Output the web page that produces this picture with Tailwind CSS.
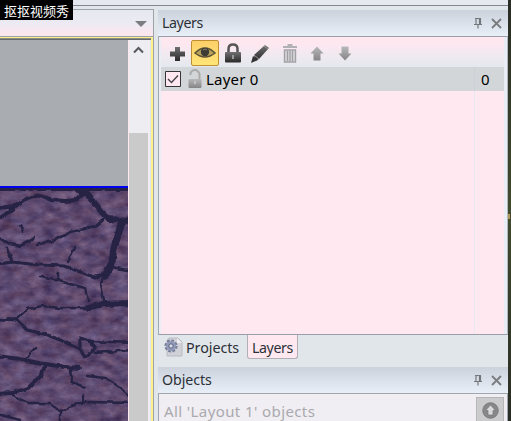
<!DOCTYPE html>
<html lang="en">
<head>
<meta charset="utf-8">
<title>Layers</title>
<script src="https://cdn.jsdelivr.net/npm/@tailwindcss/browser@4"></script>
</head>
<body class="relative flex h-[421px] w-[511px] flex-col overflow-hidden bg-[#e1e6ea] font-['Noto_Sans','Noto_Sans_CJK_SC',sans-serif] text-[14px] text-[#2c3036]">
<svg class="absolute h-0 w-0">
  <defs>
    <linearGradient id="dark" x1="0" y1="0" x2="0" y2="1"><stop offset="0" stop-color="#707070"/><stop offset="1" stop-color="#292929"/></linearGradient>
    <linearGradient id="soft" x1="0" y1="0" x2="0" y2="1"><stop offset="0" stop-color="#b8b8ba"/><stop offset="1" stop-color="#858587"/></linearGradient>
    <symbol id="pin" viewBox="0 0 10 12"><path d="M2 1.500h6M3 1.500v6M6.500 1.500v6M7.500 1.500v6M1 7.500h8M5 8v3.500" fill="none" stroke="#74777b" stroke-width="1.200"/></symbol>
    <symbol id="close" viewBox="0 0 11 11"><path d="M1 1l9 9M10 1l-9 9" fill="none" stroke="#7b7d81" stroke-width="1.900"/></symbol>
  </defs>
</svg>
<div class="mr-[3px] flex h-[6px] shrink-0 border-b border-[#85868f] bg-[#e5e8ee]"></div>
<div class="flex min-h-0 flex-1">
  <main class="mt-[3px] flex w-[154px] shrink-0 flex-col border-t border-r border-[#9ea3aa]">
    <div class="flex h-[27px] shrink-0 items-start justify-end border-b border-[#9ea3aa] bg-linear-to-b from-[#e5e9ef] via-[#eceaf4] to-[#ffe6ee] pt-[11px] pr-[6px]">
      <svg class="h-[6px] w-[12px]" viewBox="0 0 12 6"><path d="M0 0h12L6 6z" fill="#7b7d80"/></svg>
    </div>
    <div class="flex min-h-0 flex-1 border-t border-r-2 border-[#fff08c]">
      <div class="flex min-h-0 w-[150px] flex-1 flex-col">
        <div class="h-[2px] shrink-0 border-b border-[#666a70] bg-[#8f8d83]"></div>
        <div class="flex min-h-0 flex-1">
          <div class="flex w-[128px] flex-col">
            <div class="h-[146px] shrink-0 bg-[#a9acb0]"></div>
            <div class="h-[2px] shrink-0 bg-[#0000f0]"></div>
            <svg class="h-[233px] w-[128px] shrink-0" viewBox="0 188 128 233">
              <defs>
                <filter id="stone" x="0" y="0" width="100%" height="100%" color-interpolation-filters="sRGB">
                  <feTurbulence type="fractalNoise" baseFrequency=".07 .12" numOctaves="4" seed="8"/>
                  <feColorMatrix values=".3 .1 0 0 .17  .3 .03 0 0 .125  .3 -.04 0 0 .305  0 0 0 0 1"/>
                  <feGaussianBlur stdDeviation=".5" edgeMode="duplicate"/>
                </filter>
                <filter id="edge" x="-5%" y="-5%" width="110%" height="110%" color-interpolation-filters="sRGB">
                  <feTurbulence type="fractalNoise" baseFrequency=".13" numOctaves="2" seed="3" result="n"/>
                  <feDisplacementMap in="SourceGraphic" in2="n" scale="4" xChannelSelector="R" yChannelSelector="G"/>
                  <feGaussianBlur stdDeviation=".7"/>
                </filter>
              </defs>
              <rect y="188" width="128" height="233" filter="url(#stone)"/>
              <g fill="none" stroke="#262344" stroke-linecap="round" stroke-linejoin="round" filter="url(#edge)">
                <g stroke-width="3.800">
                  <path d="M-3 208L15 206 28 198 40 195 52 200 65 201 75 200 85 192M-3 220L10 211 15 206M-3 189H132"/>
                  <path d="M-3 237L10 244 20 246 29 242 33 238M37 245L55 240 70 232 85 229 97 225 103 220" stroke-width="2.800"/>
                  <path d="M7 248L12 262 40 265 65 266 80 272 95 277 106 275M-3 264L12 262" stroke-width="3"/>
                  <path d="M-3 319L17 320 27 330 45 334 65 342 80 350 85 357 95 349 90 341 80 338V347" stroke-width="3.200"/>
                  <path d="M-3 356L20 359 45 364 65 367 80 368M45 364L42 375 28 388 12 393-3 394"/>
                </g>
                <path d="M78 190L87 193 100 210 108 219 132 221" stroke-width="6"/>
                <path d="M122 222L118 235 114 248 112 262 105 276" stroke-width="7"/>
                <path d="M132 303L103 304 88 308" stroke-width="6"/>
                <g stroke-width="2.400">
                  <path d="M75 247L68 262M112 267L132 271M20 225L23 232M57 273L58 281M40 277L55 280 70 284 85 288 88 300M103 276L101 285 104 300"/>
                  <path d="M88 308L60 308 42 306 27 309 17 319M95 353L132 350M90 341L132 343M25 359L35 348"/>
                  <path d="M70 370L72 382 85 387M87 376L105 378 118 386 132 397M12 395L28 403 50 403 60 412 80 403 88 402 132 403M60 412V424M-3 414L20 420M83 395V402"/>
                </g>
              </g>
            </svg>
          </div>
          <div class="flex w-[22px] flex-col border-l border-[#ffe7ee] bg-[#eeedf1]">
            <div class="flex h-[93px] shrink-0 justify-center pt-[6px]"><svg class="-ml-[2px] h-[8px] w-[11px]" viewBox="0 0 11 8"><path d="M1 6.500L5.500 2 10 6.500" fill="none" stroke="#56585d" stroke-width="2"/></svg></div>
            <div class="w-[19px] flex-1 bg-[#cacaca]"></div>
          </div>
        </div>
      </div>
    </div>
  </main>
  <aside class="ml-[4px] flex w-[350px] shrink-0 flex-col pt-[4px]">
    <header class="flex h-[26px] shrink-0 items-center bg-linear-to-b from-[#cbd2dc] to-[#e8eff7] pr-[6px] pl-[4px]">
      <span class="flex-1 text-[14.200px] tracking-[-.4px]">Layers</span>
      <svg class="mr-[8px] h-[12px] w-[10px]"><use href="#pin"/></svg><svg class="h-[11px] w-[11px]"><use href="#close"/></svg>
    </header>
    <section class="flex h-[299px] shrink-0 flex-col border border-[#999ea7] border-r-[#b4b8bf] border-l-[#a4a9b0] bg-[#ffe8ef]">
      <div class="flex min-h-0 flex-1 flex-col border-r-3 border-l-2 border-[#e9edf5]">
        <div class="flex h-[30px] shrink-0 items-center bg-linear-to-b from-[#ffe7ef] from-20% via-[#f4e9f1] via-50% to-[#e3e9ee] pt-[3px] pl-[8px]">
          <svg class="h-[16px] w-[17px]" viewBox="0 0 17 16"><path d="M6 1h5v4.500h5v5h-5V15H6v-4.500H1v-5h5z" fill="url(#dark)"/></svg>
          <div class="mt-[-2px] ml-[5px] flex h-[26px] w-[28px] items-center justify-center rounded-[2px] border border-[#bd8e32] bg-linear-to-b from-[#fcd069] to-[#ffe577]">
            <svg class="h-[14px] w-[22px]" viewBox="0 0 22 14"><path d="M1 7Q11-3 21 7 11 15 1 7z" fill="#b7a35b" stroke="#5d5336" stroke-width="1.600"/><circle cx="11" cy="6" r="4.200" fill="#3d3b35"/><path d="M9 4Q11 2 13 4" fill="none" stroke="#8a836c"/></svg>
          </div>
          <svg class="mt-[-2px] ml-[6px] h-[20px] w-[16px]" viewBox="0 0 16 20"><path d="M3.500 10V6Q3.500 1.500 8 1.500T12.500 6v4" fill="none" stroke="#555" stroke-width="2.500"/><rect y="9" width="16" height="10.500" rx="1" fill="url(#dark)"/><path d="M7 12h2v4H7z" fill="#999"/></svg>
          <svg class="ml-[9px] h-[20px] w-[20px]" viewBox="0 0 20 20"><path d="M4 11L15 1l4 3L9 15 5 17z" fill="url(#dark)"/><path d="M3 12l5 4-7 3z" fill="#333"/><path d="M4 11l5 4M14 2l4 3" stroke="#aaa" stroke-width=".8"/></svg>
          <svg class="mt-[-1px] ml-[13px] h-[20px] w-[14px]" viewBox="0 0 14 20"><path d="M0 5v-2h4.500V1h5v2H14v2z" fill="#b1b1b4"/><path d="M1.500 7h11v12h-11z" fill="#d6d5d9" stroke="#a2a2a6" stroke-width="1.400"/><path d="M4.500 8v10M7 8v10M9.500 8v10" stroke="#a0a0a4" stroke-width="1.300"/></svg>
          <svg class="mt-[-1px] ml-[13px] h-[15px] w-[14px]" viewBox="0 0 14 15"><path d="M7 .500L13.500 7.500h-3V14.500h-7V7.500h-3z" fill="url(#soft)"/></svg>
          <svg class="ml-[14px] h-[15px] w-[14px]" viewBox="0 0 14 15"><path d="M7 14.500L13.500 7.500h-3V.500h-7v7h-3z" fill="url(#soft)"/></svg>
        </div>
        <div class="flex h-[24px] shrink-0 items-center bg-[#d3d6d8] pl-[4px] text-[15px] text-black">
          <svg class="h-[16px] w-[16px]" viewBox="0 0 16 16"><path d="M.500.500h15v15H.500z" fill="#ffe8ef" stroke="#34343a"/><path d="M3 8l3.500 3.500L13 4.500" fill="none" stroke="#44444a" stroke-width="1.400"/></svg>
          <svg class="ml-[7px] h-[20px] w-[14px]" viewBox="0 0 14 20"><path d="M2.500 6V4Q4 1 7 1t4.500 4v6" fill="none" stroke="#aaa" stroke-width="2"/><rect x=".500" y="10" width="13" height="9" rx="1" fill="url(#soft)"/><path d="M7 12v3" stroke="#ccc" stroke-width="1.500"/></svg>
          <span class="ml-[4px] w-[268px] text-[15px] tracking-[.2px]">Layer 0</span>
          <span class="flex h-full flex-1 items-center border-l border-[#cad1d9] pl-[6px]">0</span>
        </div>
        <div class="flex flex-1"><div class="w-[314px] border-r border-[#e6e8f2]"></div></div>
      </div>
    </section>
    <nav class="flex h-[32px] shrink-0 items-start pl-[5px]">
      <svg class="mt-[2px] h-[20px] w-[20px]" viewBox="0 0 20 20"><path d="M6 1h9l4 4v14H4V3z" fill="#d0d1d8" stroke="#b9bbc1"/><path d="M14 1v5h5" fill="#efedf2"/><circle cx="8" cy="9" r="5.300" fill="#a7aec6" stroke="#777e98" stroke-width="2.600" stroke-dasharray="2.600 1.500"/><circle cx="8" cy="9" r="4.800" fill="#929cb9"/><circle cx="8" cy="9" r="2.200" fill="#d8dae5" stroke="#596180"/></svg>
      <span class="mt-[3px] ml-[3px] w-[61px] text-[14.300px] leading-[20px] tracking-[-.05px]">Projects</span>
      <span class="h-[24px] w-[51px] rounded-b-[3px] border border-t-0 border-[#b2afb7] bg-[#ffe8ef] pt-[3px] pl-[4px] text-[14.200px] leading-[20px] tracking-[-.4px]">Layers</span>
    </nav>
    <header class="flex h-[26px] shrink-0 items-center bg-linear-to-b from-[#cbd2dc] to-[#e8eff7] pr-[6px] pl-[4px]">
      <span class="flex-1 text-[14.200px] tracking-[-.05px]">Objects</span>
      <svg class="mr-[8px] h-[12px] w-[10px]"><use href="#pin"/></svg><svg class="h-[11px] w-[11px]"><use href="#close"/></svg>
    </header>
    <section class="flex flex-1 border-x border-t border-[#a1a6ae] bg-[#f0eef2] pr-[3px]">
      <span class="flex-1 pt-[7px] pl-[5px] text-[15px] leading-[20px] tracking-[.4px] text-[#aaa9ae]">All 'Layout 1' objects</span>
      <div class="mt-[3px] flex h-[28px] w-[28px] items-center justify-center border border-[#b6b6b9] bg-[#cbcbcd]"><svg class="mt-[-2px] h-[17px] w-[17px]" viewBox="0 0 17 17"><circle cx="8.500" cy="8.500" r="7.700" fill="#88888a" stroke="#77777a"/><path d="M8.500 3L13.500 8.500H11V13H6V8.500H3.500z" fill="#d9d9da" stroke="#777" stroke-width=".7"/></svg></div>
    </section>
  </aside>
</div>
<div class="absolute top-0 left-0 flex h-[20px] w-[73px] items-center bg-black pt-px pl-[4px] font-['Noto_Sans_CJK_SC',sans-serif] text-[13px] leading-[20px] text-white">抠抠视频秀</div>
<div class="absolute top-0 right-0 h-full w-[3px] bg-linear-to-b from-[#292c25] via-[#414b2d] to-[#292c25]"><div class="mt-[214px] h-[5px] w-[2px] bg-[#ae9559]"></div></div>
</body>
</html>
